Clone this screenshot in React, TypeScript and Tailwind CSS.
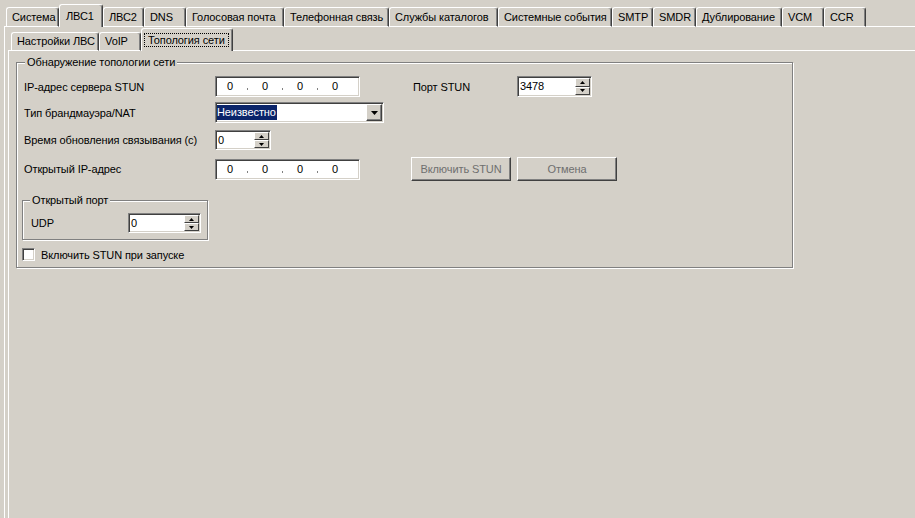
import React from "react";

type TabDef = { label: string; w: string; sel?: boolean; focus?: boolean };

const topTabs: TabDef[] = [
  { label: "Система", w: "w-[53px]" },
  { label: "ЛВС1", w: "w-[44px]", sel: true },
  { label: "ЛВС2", w: "w-[41px]" },
  { label: "DNS", w: "w-[42px]" },
  { label: "Голосовая почта", w: "w-[98px]" },
  { label: "Телефонная связь", w: "w-[105px]" },
  { label: "Службы каталогов", w: "w-[109px]" },
  { label: "Системные события", w: "w-[114px]" },
  { label: "SMTP", w: "w-[41px]" },
  { label: "SMDR", w: "w-[43px]" },
  { label: "Дублирование", w: "w-[86px]" },
  { label: "VCM", w: "w-[42px]" },
  { label: "CCR", w: "w-[42px]" },
];

const subTabs: TabDef[] = [
  { label: "Настройки ЛВС", w: "w-[88px]" },
  { label: "VoIP", w: "w-[42px]" },
  { label: "Топология сети", w: "w-[92px]", sel: true, focus: true },
];

function TopTab({ t }: { t: TabDef }) {
  if (t.sel) {
    return (
      <div
        className={`${t.w} h-[23px] shrink-0 flex items-center pl-[6px] border-t border-l border-r border-t-white border-l-white border-r-[#404040] rounded-t-[3px] shadow-[inset_-1px_0_0_#808080] bg-[#d4d0c8] relative`}
      >
        {t.label}
      </div>
    );
  }
  return (
    <div
      className={`${t.w} h-[20px] shrink-0 flex items-center pl-[5px] border border-t-white border-l-white border-b-white border-r-[#404040] rounded-t-[3px] shadow-[inset_-1px_0_0_#808080]`}
    >
      {t.label}
    </div>
  );
}

function SubTab({ t }: { t: TabDef }) {
  if (t.sel) {
    return (
      <div
        className={`${t.w} h-[23px] shrink-0 flex items-center pl-[2px] pr-[3px] border-t border-l border-r border-t-white border-l-white border-r-[#404040] rounded-t-[3px] shadow-[inset_-1px_0_0_#808080] bg-[#d4d0c8]`}
      >
        <div className="flex-1 h-[14px] flex items-center pl-[3px] border border-dotted border-black whitespace-nowrap overflow-hidden">
          {t.label}
        </div>
      </div>
    );
  }
  return (
    <div
      className={`${t.w} h-[19px] shrink-0 flex items-center pl-[5px] border border-t-white border-l-white border-b-white border-r-[#404040] rounded-t-[3px] shadow-[inset_-1px_0_0_#808080]`}
    >
      {t.label}
    </div>
  );
}

const sunken =
  "bg-white border border-t-[#808080] border-l-[#808080] border-r-white border-b-white shadow-[inset_1px_1px_0_#404040,inset_-1px_-1px_0_#d4d0c8] p-[1px]";

function IpField() {
  const parts = ["0", "0", "0", "0"];
  return (
    <div className={`${sunken} w-[145px] h-[21px] flex items-center pl-[11px]`}>
      {parts.map((p, i) => (
        <React.Fragment key={i}>
          <span className="w-[6px] text-center">{p}</span>
          {i < 3 && (
            <span className="w-[29px] flex justify-center">
              <span className="w-[1px] h-[2px] mt-[5px] bg-[#808080]" />
            </span>
          )}
        </React.Fragment>
      ))}
    </div>
  );
}

function Arrow({ up }: { up?: boolean }) {
  return (
    <svg width="5" height="3" viewBox="0 0 5 3">
      {up ? <polygon points="2.5,0 5,3 0,3" fill="#000" /> : <polygon points="0,0 5,0 2.5,3" fill="#000" />}
    </svg>
  );
}

function SpinHalf({ up }: { up?: boolean }) {
  return (
    <div className="flex-1 flex items-center justify-center bg-[#d4d0c8] border border-t-white border-l-white border-r-[#404040] border-b-[#404040]">
      <Arrow up={up} />
    </div>
  );
}

function Spin({ w, h, value }: { w: string; h: string; value: string }) {
  return (
    <div className={`${sunken} ${w} ${h} flex`}>
      <div className="flex-1 flex items-center pl-[1px]">{value}</div>
      <div className="w-[15px] flex flex-col">
        <SpinHalf up />
        <SpinHalf />
      </div>
    </div>
  );
}

function Combo() {
  return (
    <div className={`${sunken} w-[169px] h-[21px] flex items-center`}>
      <div className="flex-1 flex items-center">
        <span className="bg-[#0a246a] text-white leading-[15px] pr-[1px]">Неизвестно</span>
      </div>
      <div className="w-[16px] h-[17px] flex items-center justify-center bg-[#d4d0c8] border border-t-white border-l-white border-r-[#404040] border-b-[#404040] shadow-[inset_-1px_-1px_0_#808080]">
        <svg width="7" height="4" viewBox="0 0 7 4">
          <polygon points="0,0 7,0 3.5,4" fill="#000" />
        </svg>
      </div>
    </div>
  );
}

function Btn({ label }: { label: string }) {
  return (
    <div className="w-[100px] h-[24px] flex items-center justify-center text-[#6f6f6f] bg-[#d4d0c8] border border-t-white border-l-white border-r-[#404040] border-b-[#404040] shadow-[inset_-1px_-1px_0_#808080]">
      {label}
    </div>
  );
}

export default function App() {
  return (
    <div className="w-[915px] h-[518px] overflow-hidden bg-[#d4d0c8] text-black text-[11px] leading-[13px] tracking-[-0.1px] font-['Liberation_Sans',Arial,sans-serif] flex flex-col">
      {/* top tab strip */}
      <div className="flex items-end h-[27px] shrink-0">
        <div className="w-[4px] shrink-0" />
        <div className="w-[2px] shrink-0 border-b border-white" />
        {topTabs.map((t) => (
          <TopTab key={t.label} t={t} />
        ))}
        <div className="flex-1 border-b border-white" />
      </div>
      {/* outer panel */}
      <div className="flex-1 ml-[4px] border-l border-white flex flex-col">
        {/* sub tab strip */}
        <div className="flex items-end h-[24px] shrink-0 ml-[3px]">
          <div className="w-[3px] shrink-0 border-b border-white" />
          {subTabs.map((t) => (
            <SubTab key={t.label} t={t} />
          ))}
          <div className="flex-1 border-b border-white" />
        </div>
        {/* inner panel */}
        <div className="flex-1 ml-[3px] border-l border-white">
          <div className="relative ml-[7px] mt-[11px] w-[777px] border border-[#808080] shadow-[inset_1px_1px_0_#fff,1px_1px_0_#fff] pl-[5px] pt-[13px] pb-[6px]">
            <div className="absolute top-[-7px] left-[8px] px-[2px] bg-[#d4d0c8]">Обнаружение топологии сети</div>

            <div className="flex items-center pl-[2px] h-[21px]">
              <div className="w-[191px] pt-[2px]">IP-адрес сервера STUN</div>
              <IpField />
              <div className="ml-[53px] w-[104px] pt-[2px]">Порт STUN</div>
              <Spin w="w-[75px]" h="h-[21px]" value="3478" />
            </div>

            <div className="flex items-center pl-[2px] h-[21px] mt-[5px]">
              <div className="w-[191px] pt-[2px]">Тип брандмауэра/NAT</div>
              <Combo />
            </div>

            <div className="flex items-center pl-[2px] h-[20px] mt-[7px]">
              <div className="w-[191px]">Время обновления связывания (с)</div>
              <Spin w="w-[56px]" h="h-[20px]" value="0" />
            </div>

            <div className="flex items-center pl-[2px] h-[24px] mt-[7px]">
              <div className="w-[191px]">Открытый IP-адрес</div>
              <IpField />
              <div className="ml-[51px] flex gap-[6px]">
                <Btn label="Включить STUN" />
                <Btn label="Отмена" />
              </div>
            </div>

            <div className="relative mt-[19px] w-[186px] border border-[#808080] shadow-[inset_1px_1px_0_#fff,1px_1px_0_#fff] pl-[8px] pt-[12px] pb-[6px] flex items-center">
              <div className="absolute top-[-7px] left-[7px] px-[2px] bg-[#d4d0c8]">Открытый порт</div>
              <div className="w-[97px] pt-[1px]">UDP</div>
              <Spin w="w-[73px]" h="h-[20px]" value="0" />
            </div>

            <div className="flex items-center h-[13px] mt-[8px]">
              <div className="w-[13px] h-[13px] bg-white border border-t-[#808080] border-l-[#808080] border-r-white border-b-white shadow-[inset_1px_1px_0_#404040,inset_-1px_-1px_0_#d4d0c8]" />
              <div className="ml-[6px] pt-[2px]">Включить STUN при запуске</div>
            </div>
          </div>
        </div>
      </div>
    </div>
  );
}
